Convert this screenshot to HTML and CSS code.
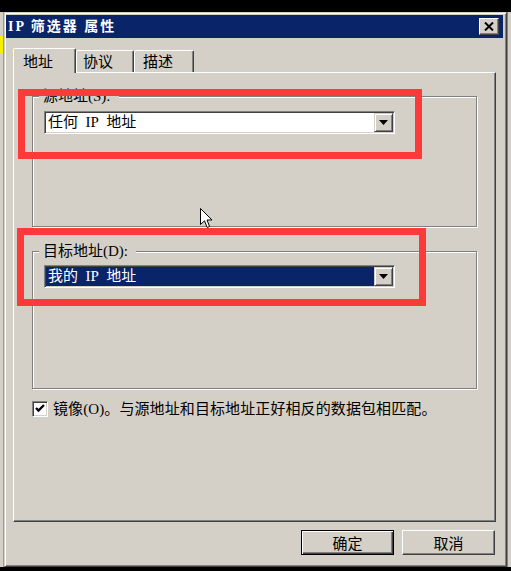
FILE: index.html
```html
<!DOCTYPE html>
<html lang="zh-CN">
<head>
<meta charset="utf-8">
<title>IP 筛选器 属性</title>
<link rel="stylesheet" href="styles.css">
</head>
<body>
<div class="screen">
  <div class="strip-left"><div class="strip-mark"></div></div>
  <div class="window">
    <div class="titlebar">
      <span class="title">IP 筛选器 属性</span>
      <button class="close" aria-label="关闭">
        <svg width="10" height="9" viewBox="0 0 10 9"><path d="M1 0.5 L9 8.5 M9 0.5 L1 8.5" stroke="#000" stroke-width="2" fill="none"/></svg>
      </button>
    </div>
    <div class="content">
      <div class="tabs">
        <div class="tab active">地址</div>
        <div class="tab t2">协议</div>
        <div class="tab t3">描述</div>
      </div>
      <div class="panel">
        <fieldset class="group g1">
          <legend>源地址(S):</legend>
          <div class="combo">
            <div class="combo-text">任何&nbsp;&nbsp;IP&nbsp;&nbsp;地址</div>
            <div class="drop"><svg width="9" height="5" viewBox="0 0 9 5"><path d="M0 0 H9 L4.5 5 Z" fill="#000"/></svg></div>
          </div>
        </fieldset>
        <fieldset class="group g2">
          <legend>目标地址(D):</legend>
          <div class="combo">
            <div class="combo-text selected">我的&nbsp;&nbsp;IP&nbsp;&nbsp;地址</div>
            <div class="drop"><svg width="9" height="5" viewBox="0 0 9 5"><path d="M0 0 H9 L4.5 5 Z" fill="#000"/></svg></div>
          </div>
        </fieldset>
        <label class="check">
          <span class="box"><svg width="12" height="12" viewBox="0 0 12 12"><path d="M2 5 L4.5 7.5 L10 2" stroke="#000" stroke-width="2.4" fill="none"/></svg></span>
          <span class="check-text">镜像(O)。与源地址和目标地址正好相反的数据包相匹配。</span>
        </label>
      </div>
      <div class="buttons">
        <button class="btn default">确定</button>
        <button class="btn">取消</button>
      </div>
    </div>
  </div>
  <div class="strip-right"></div>
</div>
<div class="mark mark1"></div>
<div class="mark mark2"></div>
<svg class="cursor" width="13" height="21" viewBox="0 0 13 21"><path d="M0.5 0.5 L0.5 16.5 L4.5 12.8 L7.2 19.5 L9.6 18.5 L7 12 L12 12 Z" fill="#fff" stroke="#000" stroke-width="1"/></svg>
</body>
</html>
```
FILE: styles.css
```css
* { box-sizing: border-box; }

body {
  margin: 0;
  background: #000;
  font-family: "Liberation Serif", "Noto Sans CJK SC", serif;
  font-size: 15px;
  color: #000;
  overflow: hidden;
}

.screen {
  display: flex;
  padding-top: 12px;
  height: 571px;
}

.strip-left {
  width: 4px;
  height: 555px;
  background: #d4d0c8;
  border-right: 1px solid #9a9a9a;
}

.strip-mark {
  margin-top: 24px;
  height: 18px;
  width: 3px;
  background: #f4f000;
}

.strip-right {
  width: 4px;
  height: 555px;
  background: #d4d0c8;
  border-left: 1px solid #808080;
}

.window {
  width: 503px;
  height: 555px;
  background: #d4d0c8;
  border: 1px solid;
  border-color: #d4d0c8 #404040 #404040 #d4d0c8;
  box-shadow: inset 1px 1px #fff, inset -1px -1px #808080;
  padding: 2px 3px 3px 1px;
  display: flex;
  flex-direction: column;
}

.titlebar {
  height: 23px;
  background: #0a246a;
  display: flex;
  align-items: center;
  justify-content: space-between;
  padding: 0 4px 0 2px;
}

.title {
  color: #fff;
  font-weight: bold;
  font-size: 14px;
  letter-spacing: 2px;
  white-space: pre;
  line-height: 23px;
}

.close {
  width: 20px;
  height: 17px;
  padding: 0;
  background: #d4d0c8;
  border: 1px solid;
  border-color: #fff #404040 #404040 #fff;
  box-shadow: inset -1px -1px #808080;
  display: flex;
  align-items: center;
  justify-content: center;
}

.content {
  flex: 1;
  padding: 10px 7px 0 7px;
  display: flex;
  flex-direction: column;
}

.tabs {
  display: flex;
  align-items: flex-end;
  height: 24px;
}

.tab {
  height: 22px;
  border: 1px solid;
  border-bottom: none;
  border-color: #fff #404040 transparent #fff;
  box-shadow: inset -1px 0 #808080;
  border-top-left-radius: 2px;
  border-top-right-radius: 2px;
  line-height: 20px;
  padding-top: 1px;
  background: #d4d0c8;
}

.tab.active {
  width: 63px;
  height: 25px;
  margin-bottom: -1px;
  padding-left: 9px;
  padding-top: 3px;
  position: relative;
  z-index: 1;
}

.tab.t2 { width: 58px; padding-left: 6px; }
.tab.t3 { width: 60px; padding-left: 8px; }

.panel {
  height: 450px;
  border: 1px solid;
  border-color: #fff #404040 #404040 #fff;
  box-shadow: inset -1px -1px #808080;
  padding: 14px 18px 0 18px;
}

.group {
  margin: 0;
  min-width: 0;
  border: 1px solid #808080;
  box-shadow: inset 1px 1px #fff, 1px 1px #fff;
}

.group legend {
  margin-left: -5px;
  padding: 0 8px 0 4px;
  line-height: 18px;
  height: 18px;
  background: #d4d0c8;
}

.g1 { padding: 6px 12px 92px 11px; }
.g2 { padding: 5px 12px 100px 11px; margin-top: 15px; }

.combo {
  width: 351px;
  height: 23px;
  border: 1px solid;
  border-color: #808080 #fff #fff #808080;
  box-shadow: inset 1px 1px #404040, inset -1px -1px #d4d0c8;
  padding: 1px;
  display: flex;
  background: #fff;
}

.combo-text {
  flex: 1;
  line-height: 19px;
  padding-left: 2px;
  white-space: nowrap;
  background: #fff;
}

.combo-text.selected {
  background: #0a246a;
  color: #fff;
}

.drop {
  width: 19px;
  border: 1px solid;
  border-color: #d4d0c8 #404040 #404040 #d4d0c8;
  box-shadow: inset 1px 1px #fff, inset -1px -1px #808080;
  background: #d4d0c8;
  display: flex;
  align-items: center;
  justify-content: center;
}

.check {
  margin-top: 12px;
  display: flex;
  align-items: center;
  gap: 5px;
  height: 16px;
}

.box {
  width: 16px;
  height: 16px;
  border: 1px solid;
  border-color: #808080 #fff #fff #808080;
  box-shadow: inset 1px 1px #404040, inset -1px -1px #d4d0c8;
  background: #fff;
  display: flex;
  align-items: center;
  justify-content: center;
}

.check-text {
  white-space: nowrap;
  line-height: 18px;
  letter-spacing: 0.1px;
}

.buttons {
  margin-top: 8px;
  display: flex;
  justify-content: flex-end;
  gap: 8px;
  padding-right: 1px;
}

.btn {
  width: 93px;
  height: 25px;
  padding: 0;
  font: inherit;
  color: #000;
  background: #d4d0c8;
  border: 1px solid;
  border-color: #fff #404040 #404040 #fff;
  box-shadow: inset -1px -1px #808080;
}

.btn.default {
  border-color: #000;
  box-shadow: inset 1px 1px #fff, inset -1px -1px #404040, inset -2px -2px #808080;
}

.mark {
  position: absolute;
  border: 7px solid #fb3a3a;
}

.mark1 { left: 18px; top: 89px; width: 404px; height: 70px; }
.mark2 { left: 17px; top: 228px; width: 409px; height: 78px; }

.cursor {
  position: absolute;
  left: 200px;
  top: 208px;
}
```
